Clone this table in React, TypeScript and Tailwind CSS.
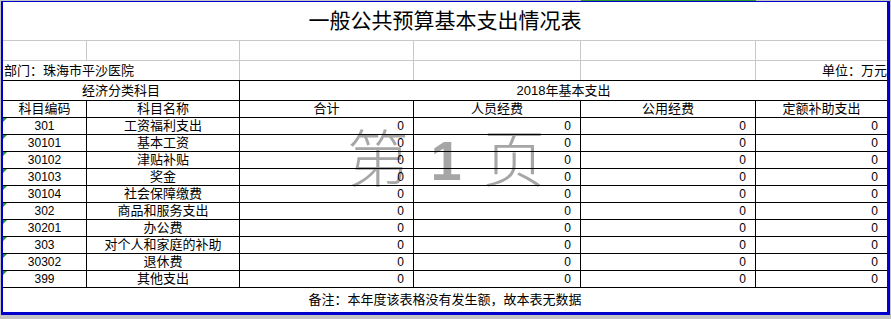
import React from "react";

const FONT = { fontFamily: '"Liberation Sans", "Noto Sans CJK SC", sans-serif' };

const items: [string, string][] = [
  ["301", "工资福利支出"],
  ["30101", "基本工资"],
  ["30102", "津贴补贴"],
  ["30103", "奖金"],
  ["30104", "社会保障缴费"],
  ["302", "商品和服务支出"],
  ["30201", "办公费"],
  ["303", "对个人和家庭的补助"],
  ["30302", "退休费"],
  ["399", "其他支出"],
];

// numeric cell, right aligned like Excel
const Num: React.FC<{ w: string; last?: boolean }> = ({ w, last }) => (
  <div
    className={`${w} h-full flex items-center justify-end pr-[9px] text-[12px] border-b border-black ${last ? "" : "border-r"}`}
  >
    0
  </div>
);

const DataRow: React.FC<{ code: string; name: string }> = ({ code, name }) => (
  <div className="flex h-[17px]">
    <div className="relative w-[84px] h-full flex items-center justify-center text-[12px] border-r border-b border-black">
      <span className="absolute left-0 top-0 w-0 h-0 border-t-[4px] border-t-[#1a9a1a] border-r-[4px] border-r-transparent" />
      {code}
    </div>
    <div className="w-[153px] h-full flex items-center justify-center text-[13px] border-r border-b border-black">
      {name}
    </div>
    <Num w="w-[174px]" />
    <Num w="w-[167px]" />
    <Num w="w-[175px]" />
    <Num w="w-[131px]" last />
  </div>
);

export default function App() {
  return (
    <div className="w-[891px] h-[319px] bg-[#c4c4c4] flex flex-col text-black" style={FONT}>
      {/* top strip with the selected column marker */}
      <div className="flex h-px">
        <div className="w-[581px]" />
        <div className="w-[175px] bg-[#2e9a2e]" />
      </div>

      {/* page frame */}
      <div className="relative ml-px w-[889px] h-[314px] bg-white border-l-2 border-t border-r-[3px] border-b-[3px] border-[#0000cc]">
        {/* page watermark */}
        <div className="absolute z-0 left-[344px] top-[128px] flex items-center text-[62px] leading-none font-light text-[#a6a6a6] select-none pointer-events-none">
          <span className="w-[72px]">第</span>
          <span className="w-[54px] text-center font-semibold text-[56px]">1</span>
          <span className="ml-[10px]">页</span>
        </div>

        <div className="relative z-10 flex flex-col">
          {/* title */}
          <div className="h-[39px] flex items-center justify-center text-[21px] border-b border-[#c8c8c8]">
            一般公共预算基本支出情况表
          </div>

          {/* empty row */}
          <div className="flex h-[20px] border-b border-[#c8c8c8]">
            <div className="w-[84px] border-r border-[#c8c8c8]" />
            <div className="w-[153px] border-r border-[#c8c8c8]" />
            <div className="w-[174px] border-r border-[#c8c8c8]" />
            <div className="w-[167px] border-r border-[#c8c8c8]" />
            <div className="w-[175px] border-r border-[#c8c8c8]" />
            <div className="w-[131px]" />
          </div>

          {/* department / unit */}
          <div className="flex h-[20px] border-b border-black text-[13px]">
            <div className="w-[237px] flex items-center pl-px border-r border-[#c8c8c8]">
              部门：珠海市平沙医院
            </div>
            <div className="w-[174px] border-r border-[#c8c8c8]" />
            <div className="w-[167px] border-r border-[#c8c8c8]" />
            <div className="w-[175px] border-r border-[#c8c8c8]" />
            <div className="w-[131px] flex items-center justify-end">单位：万元</div>
          </div>

          {/* group header */}
          <div className="flex h-[20px] border-b border-black text-[13px]">
            <div className="w-[237px] flex items-center justify-center border-r border-black">
              经济分类科目
            </div>
            <div className="w-[647px] flex items-center justify-center">2018年基本支出</div>
          </div>

          {/* column header */}
          <div className="flex h-[17px] text-[13px]">
            <div className="w-[84px] flex items-center justify-center border-r border-b border-black">科目编码</div>
            <div className="w-[153px] flex items-center justify-center border-r border-b border-black">科目名称</div>
            <div className="w-[174px] flex items-center justify-center border-r border-b border-black">合计</div>
            <div className="w-[167px] flex items-center justify-center border-r border-b border-black">人员经费</div>
            <div className="w-[175px] flex items-center justify-center border-r border-b border-black">公用经费</div>
            <div className="w-[131px] flex items-center justify-center border-b border-black">定额补助支出</div>
          </div>

          {items.map(([code, name]) => (
            <DataRow key={code} code={code} name={name} />
          ))}

          {/* note */}
          <div className="h-[24px] flex items-center justify-center text-[13px]">
            备注：本年度该表格没有发生额，故本表无数据
          </div>
        </div>
      </div>
    </div>
  );
}
